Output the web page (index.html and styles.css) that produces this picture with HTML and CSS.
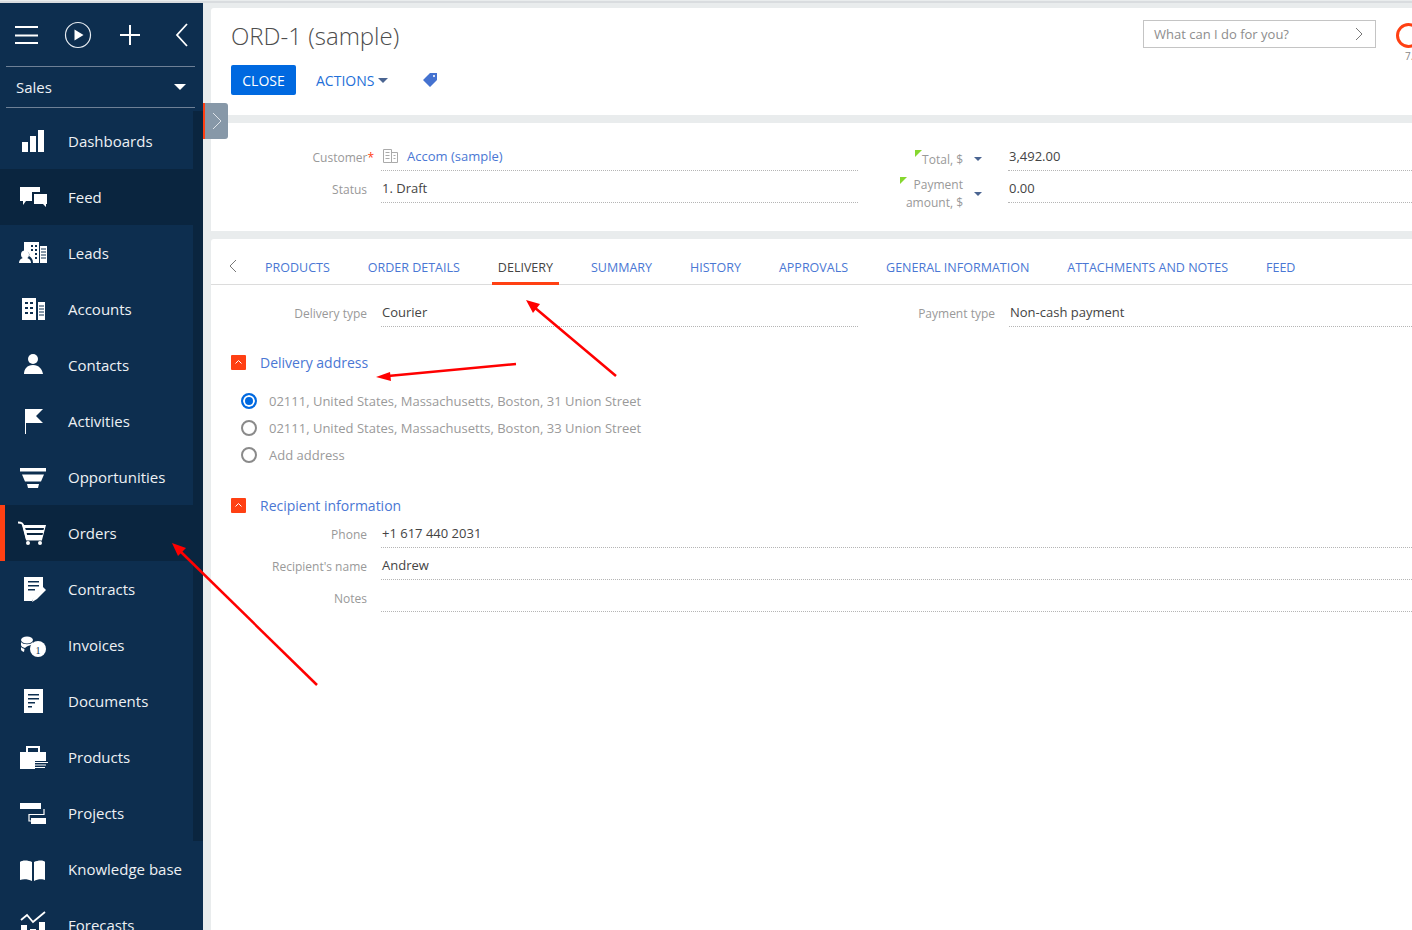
FILE: index.html
```html
<!DOCTYPE html>
<html lang="en">
<head>
<meta charset="utf-8">
<title>ORD-1 (sample)</title>
<link rel="stylesheet" href="styles.css">
</head>
<body>
<aside class="sidebar">
  <div class="toolbar">
    <svg class="tool tool-menu" viewBox="0 0 24 20"><path d="M0 2h23M0 10.500h23M0 18h23" stroke="#fff" stroke-width="2" fill="none"/></svg>
    <svg class="tool tool-play" viewBox="0 0 28 28"><circle cx="14" cy="14" r="12.500" stroke="#e8edf2" stroke-width="1.200" fill="none"/><path d="M10.500 8.500v11l9-5.500z" fill="#fff"/></svg>
    <svg class="tool tool-plus" viewBox="0 0 20 20"><path d="M10 0v20M0 10h20" stroke="#fff" stroke-width="2" fill="none"/></svg>
    <svg class="tool tool-back" viewBox="0 0 13 24"><path d="M12 1 2 12l10 11" stroke="#fff" stroke-width="1.800" fill="none"/></svg>
  </div>
  <div class="workplace"><span>Sales</span><i class="workplace-caret"></i></div>
  <div class="scroll-strip"></div>
  <nav class="nav">
    <a class="nav-item"><svg class="nav-icon" viewBox="0 0 36 36"><path d="M7 19h6v10H7zM15 13h6v16h-6zM23 7h6v22h-6z"/></svg>Dashboards</a>
    <a class="nav-item is-dark"><svg class="nav-icon" viewBox="0 0 36 36"><path d="M5 8h20v14H11l-3 4v-4H5z"/><path d="M17 13h16v12h-1v4l-4-4H17z" fill="#0a253f"/><path d="M19 15h13v10h-1v3l-3-3h-9z"/></svg>Feed</a>
    <a class="nav-item"><svg class="nav-icon" viewBox="0 0 36 36"><path fill-rule="evenodd" d="M9 7h15v21H18c0-4-2-6-4-7 1-2 0-5-5-5zM16 10v2h2v-2zM20 10v2h2v-2zM16 14v2h2v-2zM20 14v2h2v-2zM20 18v2h2v-2zM20 22v2h2v-2z"/><path d="M25 11h7v17h-7z"/><path d="M26 14h5M26 17h5M26 20h5M26 23h5" stroke="#0d2e4f"/><circle cx="10" cy="19.500" r="4"/><path d="M4 28c0-7 12-7 12 0z"/></svg>Leads</a>
    <a class="nav-item"><svg class="nav-icon" viewBox="0 0 36 36"><path fill-rule="evenodd" d="M7 7h14v22H7zM10 11v2h3v-2zM15 11v2h3v-2zM10 16v2h3v-2zM15 16v2h3v-2zM10 21v2h3v-2zM15 21v2h3v-2z"/><path d="M23 11h7v18h-7z"/><path d="M24 15h5M24 18h5M24 21h5M24 24h5" stroke="#0d2e4f"/></svg>Accounts</a>
    <a class="nav-item"><svg class="nav-icon" viewBox="0 0 36 36"><circle cx="18" cy="12" r="5"/><path d="M9 27c0-5 3-9 9-9s9 4 10 9z"/></svg>Contacts</a>
    <a class="nav-item"><svg class="nav-icon" viewBox="0 0 36 36"><path d="M10 6h1v25h-1zM11 6h17l-7 7 7 7H11z"/></svg>Activities</a>
    <a class="nav-item"><svg class="nav-icon" viewBox="0 0 36 36"><path d="M5 9h26v3.500H5zM7 15.500h22l-3 7H10zM12 25h12l-1 4H13z"/></svg>Opportunities</a>
    <a class="nav-item is-dark is-active"><svg class="nav-icon" viewBox="0 0 36 36"><path d="M3 7.500c4 0 5 1 6 5l3 12h15" stroke="#fff" stroke-width="1.800" fill="none"/><path fill-rule="evenodd" d="M7 10h24l-4 15H11zM10 13l.5 2h18l.5-2zM11.500 18l.5 2h15.500l.5-2z"/><circle cx="13" cy="28" r="2"/><circle cx="25" cy="28" r="2"/></svg>Orders</a>
    <a class="nav-item"><svg class="nav-icon" viewBox="0 0 36 36"><path fill-rule="evenodd" d="M9 6h19v12l-9 9-2 3H9zM13 10v1.500h11V10zM13 14v1.500h11V14zM13 18v1.500h7V18z"/><path d="M17 31l2-6 9-9 3 3-9 9z"/></svg>Contracts</a>
    <a class="nav-item"><svg class="nav-icon" viewBox="0 0 36 36"><ellipse cx="12" cy="13" rx="6" ry="3.500"/><path d="M6 15c2 3 10 3 12 0v2.500c-4 1-7 2-8 3.500-2-.5-4-1.500-4-3zM6 20c1 1 2 1.500 3.500 2l-.5 3c-1.500-.5-3-1.500-3-2.500z"/><circle cx="23" cy="22" r="8"/><text class="coin-digit" x="23" y="26.500" text-anchor="middle">1</text></svg>Invoices</a>
    <a class="nav-item"><svg class="nav-icon" viewBox="0 0 36 36"><path fill-rule="evenodd" d="M9 6h19v24H9zM13 11v1.500h11V11zM13 15v1.500h11V15zM13 19v1.500h7V19zM13 23v1.500h4V23z"/></svg>Documents</a>
    <a class="nav-item"><svg class="nav-icon" viewBox="0 0 36 36"><path d="M11 7h14v6h-2V9H13v4h-2zM5 13h26v9H20v8H5z"/><path d="M20 23.500h13M20 26h11M20 28.500h10" stroke="#fff" stroke-width="1.200"/></svg>Products</a>
    <a class="nav-item"><svg class="nav-icon" viewBox="0 0 36 36"><path d="M5 8h21v6H5zM16 23h15v6H16z"/><path d="M29 14v5.500H14V26h2" stroke="#fff" stroke-width="1.200" fill="none"/></svg>Projects</a>
    <a class="nav-item is-wide"><svg class="nav-icon" viewBox="0 0 36 36"><path d="M5 11c2-2 8-2 12 0v19c-4-2-9-2-12-1zM19 11c4-2 10-2 11 0v18c-2-1-8-1-11 1z"/></svg>Knowledge base</a>
    <a class="nav-item is-wide"><svg class="nav-icon" viewBox="0 0 36 36"><path d="M6 13l6-5 6 7L30 5" stroke="#fff" stroke-width="1.800" fill="none"/><path d="M6 18h6v12H6zM15 22h6v8h-6zM24 15h6v15h-6z"/></svg>Forecasts</a>
  </nav>
</aside>

<main class="main">
  <section class="panel panel-head">
    <div class="head-left">
      <h1 class="title">ORD-1 (sample)</h1>
      <div class="actions">
        <button class="btn-close">CLOSE</button>
        <span class="btn-actions">ACTIONS<i class="caret caret-blue"></i></span>
        <svg class="tag" viewBox="0 0 16 16"><path d="M8 1h7v7l-7 7-7-7zM12 3a1 1 0 1 0 .01 0z" fill="#4472d0" fill-rule="evenodd"/></svg>
      </div>
    </div>
    <div class="search"><span>What can I do for you?</span><svg class="search-go" viewBox="0 0 8 14"><path d="M1 1l6 6-6 6" stroke="#777" fill="none"/></svg></div>
    <div class="logo"><i class="logo-ring"></i><span class="logo-ver">7.</span></div>
  </section>

  <section class="panel panel-info">
    <div class="col-left">
      <div class="field">
        <label class="label label-star">Customer<em>*</em></label>
        <div class="value">
          <svg class="acc-icon" viewBox="0 0 16 14"><path d="M.5.500h8v13h-8zM8.500 3.500h6v10h-6zM2.500 3.500h4M2.500 6.500h4M2.500 9.500h4M10.500 6.500h2M10.500 9.500h2" stroke="#aaa" fill="none"/></svg>
          <a class="link">Accom (sample)</a>
        </div>
      </div>
      <div class="field">
        <label class="label">Status</label>
        <div class="value">1. Draft</div>
      </div>
    </div>
    <div class="col-right">
      <div class="field">
        <label class="label label-short"><span class="flagged">Total, $</span></label><i class="caret caret-small"></i>
        <div class="value">3,492.00</div>
      </div>
      <div class="field">
        <label class="label label-short label-wrap"><span class="flagged flagged-wrap">Payment<br>amount, $</span></label><i class="caret caret-small caret-low"></i>
        <div class="value">0.00</div>
      </div>
    </div>
  </section>

  <section class="panel panel-tabs">
    <div class="tabs">
      <svg class="tabs-back" viewBox="0 0 8 14"><path d="M7 1 1 7l6 6" stroke="#777" fill="none"/></svg>
      <a class="tab">PRODUCTS</a>
      <a class="tab">ORDER DETAILS</a>
      <a class="tab is-active">DELIVERY</a>
      <a class="tab">SUMMARY</a>
      <a class="tab">HISTORY</a>
      <a class="tab">APPROVALS</a>
      <a class="tab">GENERAL INFORMATION</a>
      <a class="tab">ATTACHMENTS AND NOTES</a>
      <a class="tab">FEED</a>
    </div>
    <div class="tab-body">
      <div class="delivery-row">
        <div class="col-left">
          <div class="field">
            <label class="label">Delivery type</label>
            <div class="value">Courier</div>
          </div>
        </div>
        <div class="col-right">
          <div class="field">
            <label class="label label-pay">Payment type</label>
            <div class="value">Non-cash payment</div>
          </div>
        </div>
      </div>

      <div class="group group-address">
        <i class="group-toggle"><svg viewBox="0 0 15 15"><path d="M4.500 8.500l3-3 3 3" stroke="#fff" fill="none"/></svg></i>
        <span class="group-title">Delivery address</span>
      </div>
      <div class="radios">
        <div class="radio-row"><i class="radio is-on"></i>02111, United States, Massachusetts, Boston, 31 Union Street</div>
        <div class="radio-row"><i class="radio"></i>02111, United States, Massachusetts, Boston, 33 Union Street</div>
        <div class="radio-row"><i class="radio"></i>Add address</div>
      </div>

      <div class="group group-recipient">
        <i class="group-toggle"><svg viewBox="0 0 15 15"><path d="M4.500 8.500l3-3 3 3" stroke="#fff" fill="none"/></svg></i>
        <span class="group-title">Recipient information</span>
      </div>
      <div class="col-left recipient">
        <div class="field"><label class="label">Phone</label><div class="value">+1 617 440 2031</div></div>
        <div class="field"><label class="label">Recipient's name</label><div class="value">Andrew</div></div>
        <div class="field"><label class="label">Notes</label><div class="value"></div></div>
      </div>
    </div>
  </section>
</main>

<div class="collapse-tab"><svg viewBox="0 0 10 18"><path d="M1 1l8 8-8 8" stroke="#dfe4e9" fill="none"/></svg></div>

<svg class="arrows" viewBox="0 0 1412 930">
  <g stroke="#f00" stroke-width="2.500" fill="none">
    <path d="M616 376 534 307"/>
    <path d="M516 364 388 376"/>
    <path d="M317 685 180 551"/>
  </g>
  <g fill="#f00">
    <path d="M526 300l14 4-7 9z"/>
    <path d="M376 377l14-5 1 9z"/>
    <path d="M172 543l14 5-8 8z"/>
  </g>
</svg>
</body>
</html>
```
FILE: styles.css
```css
* { box-sizing: border-box; }
html, body { margin: 0; height: 930px; overflow: hidden; }
body {
  display: flex;
  align-items: stretch;
  padding-top: 3px;
  background: #e9eced;
  border-top: 2px solid #d9dcdf;
  margin-top: 1px;
  height: 929px;
  font-family: "Open Sans", sans-serif;
  color: #444;
  font-size: 13px;
}
a { text-decoration: none; }

/* sidebar */
.sidebar {
  position: relative;
  flex: 0 0 203px;
  margin-top: -3px;
  background: #0d2e4f;
  color: #fff;
}
.toolbar { height: 63px; position: relative; }
.tool { position: absolute; display: block; }
.tool-menu { left: 15px; top: 22px; width: 24px; height: 20px; }
.tool-play { left: 64px; top: 18px; width: 28px; height: 28px; }
.tool-plus { left: 120px; top: 22px; width: 20px; height: 20px; }
.tool-back { left: 175px; top: 20px; width: 13px; height: 24px; }
.workplace {
  margin: 0 8px 0 6px;
  height: 42px;
  padding: 0 10px;
  display: flex;
  align-items: center;
  justify-content: space-between;
  border-top: 1px solid #6e8096;
  border-bottom: 1px solid #6e8096;
  font-size: 15px;
  color: #eef1f4;
}
.workplace-caret {
  border: 6px solid transparent;
  border-top-color: #fff;
  border-bottom: 0;
  border-left-width: 6px;
  margin-right: -1px;
}
.scroll-strip {
  position: absolute;
  left: 193px;
  top: 108px;
  width: 10px;
  height: 730px;
  background: #0a253f;
}
.nav { margin-top: 5px; }
.nav-item {
  display: flex;
  align-items: center;
  width: 193px;
  height: 56px;
  padding-left: 15px;
  color: #eef1f4;
  font-size: 15px;
  position: relative;
}
.nav-item.is-dark { background: #0a253f; }
.nav-item.is-wide { width: 203px; }
.nav-item.is-active { box-shadow: inset 5px 0 0 #ff4013; }
.nav-icon { width: 36px; height: 36px; margin-right: 17px; fill: #fff; flex: none; }
.coin-digit { fill: #0d2e4f; font-size: 10px; font-family: "Liberation Serif", serif; }

/* main */
.main {
  flex: 1;
  min-width: 0;
  padding-left: 8px;
  display: flex;
  flex-direction: column;
  gap: 8px;
}
.panel { background: #fff; border-radius: 3px 0 0 0; position: relative; }
.panel-head {
  height: 107px;
  margin-top: 2px;
  flex: none;
  padding-left: 20px;
  display: flex;
  align-items: flex-start;
}
.head-left { flex: 1; }
.title {
  margin: 10px 0 0;
  height: 36px;
  font-weight: 300;
  font-size: 24px;
  line-height: 36px;
  color: #4d4d4d;
}
.actions { display: flex; align-items: center; margin-top: 11px; height: 30px; }
.btn-close {
  width: 65px;
  height: 30px;
  border: 0;
  border-radius: 2px;
  background: #0069e0;
  color: #fff;
  font: 14px "Open Sans", sans-serif;
}
.btn-actions {
  margin-left: 20px;
  font-size: 14px;
  color: #1f6fd8;
  display: flex;
  align-items: center;
}
.caret {
  display: block;
  width: 0;
  height: 0;
  border: 5px solid transparent;
  border-top-color: #4a6491;
  border-bottom: 0;
}
.caret-blue { margin-left: 4px; }
.tag { width: 16px; height: 16px; margin-left: 34px; }
.search {
  margin-top: 12px;
  width: 233px;
  height: 28px;
  border: 1px solid #c4c4c4;
  padding: 0 10px;
  display: flex;
  align-items: center;
  justify-content: space-between;
  color: #8d8d8d;
}
.search-go { width: 8px; height: 14px; margin-right: 2px; }
.logo { width: 36px; flex: none; position: relative; height: 60px; overflow: hidden; }
.logo-ring {
  position: absolute;
  left: 20px;
  top: 15px;
  width: 25px;
  height: 25px;
  border: 3px solid #ff4013;
  border-radius: 50%;
}
.logo-ver { position: absolute; left: 29px; top: 41px; font-size: 10px; color: #888; }

.panel-info {
  height: 108px;
  flex: none;
  padding-top: 19px;
  display: flex;
  overflow: hidden;
}
.col-left { flex: 0 0 647px; }
.col-right { flex: 0 0 560px; margin-left: 22px; }
.field { display: flex; height: 32px; align-items: flex-start; }
.label {
  flex: 0 0 156px;
  text-align: right;
  font-size: 12px;
  color: #999;
  line-height: 32px;
}
.label-star { flex-basis: 163px; }
.label-star em { color: #ff4013; font-style: normal; }
.label-star + .value { margin-left: 7px; }
.value {
  flex: 1;
  margin-left: 14px;
  height: 29px;
  border-bottom: 1px dotted #b5b5b5;
  line-height: 30px;
  padding-left: 1px;
  display: flex;
  align-items: center;
  color: #444;
}
.acc-icon { width: 16px; height: 14px; margin-right: 8px; margin-left: 1px; }
.link { color: #4a77d4; }
.label-short { flex: 0 0 83px; }
.label-wrap { line-height: 18px; padding-top: 2px; height: 40px; }
.flagged { position: relative; padding-top: 2px; display: inline-block; }
.flagged::before {
  content: "";
  position: absolute;
  left: -7px;
  top: 8px;
  border-top: 7px solid #86d72f;
  border-right: 7px solid transparent;
}
.flagged-wrap { padding-top: 0; text-align: right; }
.flagged-wrap::before { top: 1px; left: -6px; }
.caret-small { margin: 15px 0 0 11px; border-width: 4px; border-bottom: 0; border-top-width: 4px; flex: none; }
.caret-low { margin-top: 18px; }
.col-right .caret-small + .value { margin-left: 26px; }

.panel-tabs { flex: 1; min-height: 0; }
.tabs {
  height: 46px;
  border-bottom: 1px solid #dcdcdc;
  display: flex;
  align-items: flex-end;
  padding-left: 18px;
  position: relative;
}
.tabs-back { width: 8px; height: 14px; margin: 0 15px 11px 0; }
.tab {
  padding: 0 6px;
  margin: 0 13px;
  height: 35px;
  line-height: 36px;
  font-size: 12.500px;
  color: #4a77d4;
  margin-bottom: -1px;
}
.tab:first-of-type { margin-left: 7px; }
.tab.is-active { color: #444; border-bottom: 3px solid #ff4013; }

.tab-body { padding-top: 13px; }
.delivery-row { display: flex; }
.label-pay { flex-basis: 115px; }
.col-right .label-pay + .value { margin-left: 14px; }

.group { display: flex; align-items: center; height: 20px; padding-left: 20px; }
.group-address { margin-top: 22px; }
.group-recipient { margin-top: 27px; }
.group-toggle {
  display: block;
  width: 15px;
  height: 15px;
  background: #ff4013;
  border-radius: 1px;
  margin-right: 14px;
}
.group-toggle svg { display: block; width: 15px; height: 15px; }
.group-title { font-size: 14px; color: #4a77d4; }
.radios { margin-top: 15px; padding-left: 30px; }
.radio-row { display: flex; align-items: center; height: 27px; color: #9a9a9a; }
.radio {
  display: block;
  width: 16px;
  height: 16px;
  border: 2px solid #8a8a8a;
  border-radius: 50%;
  margin-right: 12px;
}
.radio.is-on { border-color: #0069e0; box-shadow: inset 0 0 0 2px #fff; background: #0069e0; }
.recipient { margin-top: 4px; }

/* overlays */
.collapse-tab {
  position: absolute;
  left: 203px;
  top: 103px;
  width: 25px;
  height: 36px;
  background: #8798a8;
  border-left: 2px solid #ff4013;
  border-radius: 0 3px 3px 0;
  display: flex;
  align-items: center;
  justify-content: center;
}
.collapse-tab svg { width: 10px; height: 18px; }
.arrows { position: absolute; left: 0; top: 0; width: 1412px; height: 930px; pointer-events: none; }
```
